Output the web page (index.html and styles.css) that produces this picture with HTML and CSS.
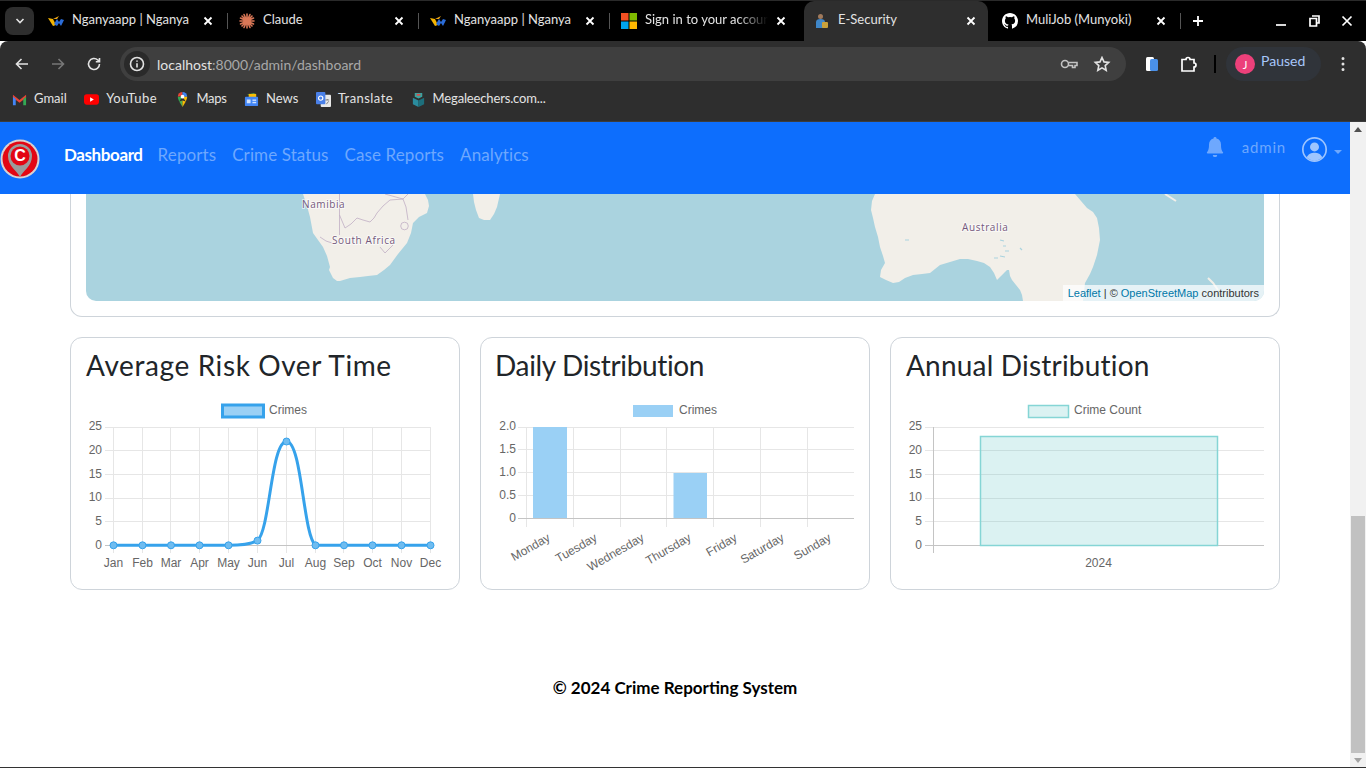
FILE: index.html
```html
<!DOCTYPE html>
<html lang="en">
<head>
    <meta charset="UTF-8">
    <meta name="viewport" content="width=device-width, initial-scale=1.0">
    <title>E-Security</title>
    <link rel="stylesheet" href="styles.css">
</head>

<body>
    <!-- browser frame -->
    <div class="tabstrip">
        <div class="tab-search">
            <svg width="10" height="6" viewBox="0 0 10 6"><path class="ic-line" d="M1.5 1 5 4.5 8.5 1"/></svg>
        </div>
        <div class="tab">
            <svg class="fav" viewBox="0 0 16 16"><path fill="#f5b400" d="M0 5l5 1 3 6-3 1z"/><path fill="#2b6cd8" d="M6 11l3-5 2 3 2-3 3 1-3 6-2-3-2 3z"/><path fill="#e8a317" d="M5 6l6-3-2 3z"/></svg>
            <span class="tab-title">Nganyaapp | Nganya</span>
            <svg class="tab-x" viewBox="0 0 10 10"><path d="M1.5 1.5l7 7M8.5 1.5l-7 7"/></svg>
        </div>
        <div class="tab">
            <svg class="fav" viewBox="0 0 16 16"><path stroke="#d97757" stroke-width="1.6" stroke-linecap="round" d="M8 1v14M1 8h14M3 3l10 10M13 3 3 13M5 1.5l6 13M11 1.5l-6 13M1.5 5l13 6M14.5 5l-13 6"/></svg>
            <span class="tab-title">Claude</span>
            <svg class="tab-x" viewBox="0 0 10 10"><path d="M1.5 1.5l7 7M8.5 1.5l-7 7"/></svg>
        </div>
        <div class="tab">
            <svg class="fav" viewBox="0 0 16 16"><path fill="#f5b400" d="M0 5l5 1 3 6-3 1z"/><path fill="#2b6cd8" d="M6 11l3-5 2 3 2-3 3 1-3 6-2-3-2 3z"/><path fill="#e8a317" d="M5 6l6-3-2 3z"/></svg>
            <span class="tab-title">Nganyaapp | Nganya</span>
            <svg class="tab-x" viewBox="0 0 10 10"><path d="M1.5 1.5l7 7M8.5 1.5l-7 7"/></svg>
        </div>
        <div class="tab tab-nosep">
            <svg class="fav" viewBox="0 0 16 16"><rect width="7.5" height="7.5" fill="#f25022"/><rect x="8.5" width="7.5" height="7.5" fill="#7fba00"/><rect y="8.5" width="7.5" height="7.5" fill="#00a4ef"/><rect x="8.5" y="8.5" width="7.5" height="7.5" fill="#ffb900"/></svg>
            <span class="tab-title tab-fade">Sign in to your account</span>
            <svg class="tab-x" viewBox="0 0 10 10"><path d="M1.5 1.5l7 7M8.5 1.5l-7 7"/></svg>
        </div>
        <div class="tab tab-active tab-nosep">
            <svg class="fav" viewBox="0 0 16 16"><circle cx="6.500" cy="3.500" r="2.500" fill="#a07a5c"/><path fill="#3f87c9" d="M2 15V9q0-3 4.500-3T11 9v6z"/><rect x="8" y="9" width="6" height="6" rx="1" fill="#c9a13b"/></svg>
            <span class="tab-title">E-Security</span>
            <svg class="tab-x" viewBox="0 0 10 10"><path d="M1.5 1.5l7 7M8.5 1.5l-7 7"/></svg>
        </div>
        <div class="tab tab-last">
            <svg class="fav" viewBox="0 0 16 16"><path fill="#fff" d="M8 0C3.580 0 0 3.580 0 8c0 3.540 2.290 6.530 5.470 7.590.4.070.55-.17.55-.38v-1.340c-2.230.48-2.700-1.070-2.700-1.070-.36-.92-.89-1.170-.89-1.170-.73-.5.050-.49.050-.49.800.060 1.230.830 1.230.830.710 1.220 1.870.870 2.330.660.070-.520.280-.870.510-1.070-1.780-.2-3.640-.890-3.640-3.950 0-.870.310-1.590.820-2.150-.080-.2-.360-1.020.080-2.120 0 0 .670-.210 2.200.820a7.600 7.600 0 0 1 4 0c1.530-1.040 2.200-.820 2.200-.820.440 1.100.160 1.920.080 2.120.510.560.820 1.270.820 2.150 0 3.070-1.870 3.750-3.650 3.950.290.250.540.730.540 1.480v2.200c0 .210.150.460.550.380A8.010 8.010 0 0 0 16 8c0-4.420-3.580-8-8-8z"/></svg>
            <span class="tab-title">MuliJob (Munyoki)</span>
            <svg class="tab-x" viewBox="0 0 10 10"><path d="M1.5 1.5l7 7M8.5 1.5l-7 7"/></svg>
        </div>
        <svg class="tab-plus" viewBox="0 0 12 12"><path d="M6 1v10M1 6h10"/></svg>
        <div class="win-controls">
            <svg viewBox="0 0 12 12"><path d="M1 10h10"/></svg>
            <svg viewBox="0 0 12 12"><path d="M4 1h7v7H9M2 3.500h6.500V11H2z"/></svg>
            <svg viewBox="0 0 12 12"><path d="M1.500 1.500l9 9M10.500 1.500l-9 9"/></svg>
        </div>
    </div>

    <div class="toolbar">
        <svg class="tool-ic" viewBox="0 0 16 16"><path class="ic-line" d="M14 8H2.500M7.500 3 2.500 8l5 5"/></svg>
        <svg class="tool-ic tool-off" viewBox="0 0 16 16"><path class="ic-line" d="M2 8h11.500M8.500 3l5 5-5 5"/></svg>
        <svg class="tool-ic" viewBox="0 0 16 16"><path class="ic-line" d="M13.500 8A5.500 5.500 0 1 1 11.800 4L13.500 5.700M13.500 2v3.700H9.800"/></svg>
        <div class="omnibox">
            <div class="site-info">
                <svg width="16" height="16" viewBox="0 0 16 16"><circle class="ic-line" cx="8" cy="8" r="6.500"/><path class="ic-line" d="M8 7.200V11.500M8 4.500v1.200"/></svg>
            </div>
            <span class="url"><span class="url-host">localhost</span>:8000/admin/dashboard</span>
            <svg class="omni-ic" viewBox="0 0 18 12"><circle class="ic-grey" cx="5" cy="6" r="3.500"/><path class="ic-grey" d="M8.500 4.500H17v3h-2v2h-2.500v-2h-4"/></svg>
            <svg class="omni-ic omni-star" viewBox="0 0 16 16"><path class="ic-line" d="M8 1.500l2 4.400 4.700.5-3.500 3.200 1 4.700L8 11.900l-4.200 2.400 1-4.700L1.300 6.400 6 5.900z"/></svg>
        </div>
        <svg class="tool-ic tool-reader" viewBox="0 0 16 16"><rect x="2" y="1" width="8" height="14" rx="1.500" fill="#fff"/><rect x="6" y="3" width="8" height="12" rx="1.500" fill="#4a90e8"/></svg>
        <svg class="tool-ic tool-ext" viewBox="0 0 18 18"><path class="ic-white" d="M2 4.500h4a2 2 0 0 1 4 0h4v3.500a2 2 0 0 1 0 4v4H2z"/></svg>
        <span class="tool-sep"></span>
        <div class="profile">
            <span class="avatar">J</span>
            <span class="paused">Paused</span>
        </div>
        <svg class="tool-ic tool-more" viewBox="0 0 16 16"><path fill="#e3e3e3" d="M6.500 2.500a1.500 1.500 0 1 0 3 0 1.500 1.500 0 0 0-3 0zM6.500 8a1.500 1.500 0 1 0 3 0 1.500 1.500 0 0 0-3 0zM6.500 13.500a1.500 1.500 0 1 0 3 0 1.500 1.500 0 0 0-3 0z"/></svg>
    </div>

    <div class="bookmarks">
        <div class="bm">
            <svg viewBox="0 0 16 16"><path fill="#ea4335" d="M1 3l7 5.500L15 3v3L8 11.500 1 6z"/><path fill="#4285f4" d="M1 5v9h3V7.500z"/><path fill="#34a853" d="M15 5v9h-3V7.500z"/></svg>
            <span>Gmail</span>
        </div>
        <div class="bm bm-wide">
            <svg viewBox="0 0 16 16"><rect y="2.500" width="16" height="11" rx="3" fill="#f00"/><path fill="#fff" d="M6.500 5.500v5l4-2.500z"/></svg>
            <span>YouTube</span>
        </div>
        <div class="bm bm-maps">
            <svg viewBox="0 0 16 16"><path fill="#4caf50" d="M8 16 4.500 10 8 9z"/><path fill="#fbbc04" d="M8 16l3.500-6L8 9z"/><path fill="#ea4335" d="M3 5a5 5 0 0 1 5-5v4z"/><path fill="#4285f4" d="M8 0a5 5 0 0 1 5 5H8z"/><path fill="#34a853" d="M3 5c0 2 1 3.500 1.500 5L8 5z"/><path fill="#fbbc04" d="M13 5c0 2-1 3.500-1.500 5L8 5z"/><circle cx="8" cy="5" r="2" fill="#fff"/></svg>
            <span>Maps</span>
        </div>
        <div class="bm">
            <svg viewBox="0 0 16 16"><path fill="#34a853" d="M3 3l8-2 1 3z"/><path fill="#fbbc04" d="M5 2h8v4H5z"/><rect x="1" y="5" width="14" height="10" rx="1" fill="#4285f4"/><rect x="3" y="8" width="4" height="4" fill="#cfe2ff"/><rect x="9" y="8" width="4" height="1.500" fill="#cfe2ff"/><rect x="9" y="10.500" width="4" height="1.500" fill="#cfe2ff"/></svg>
            <span>News</span>
        </div>
        <div class="bm bm-wide">
            <svg viewBox="0 0 16 16"><rect x="5" y="3" width="11" height="13" rx="1" fill="#e8e8e8"/><rect width="10" height="13" rx="1" fill="#4a80e8"/><circle cx="5" cy="6.500" r="2.300" fill="none" stroke="#fff" stroke-width="1.200"/><path stroke="#777" d="M10 8.500h4M12 7.500v1M11 13l2.500-3"/></svg>
            <span>Translate</span>
        </div>
        <div class="bm bm-narrow">
            <svg viewBox="0 0 16 16"><path fill="#2a8c9e" d="M2 6l6 3v7l-6-3z"/><path fill="#1d6f7c" d="M14 6 8 9v7l6-3z"/><path fill="#3aa3a0" d="M4 1h8v4l-4 2-4-2z"/><rect x="6" y="2" width="4" height="2" fill="#d3504c"/></svg>
            <span>Megaleechers.com...</span>
        </div>
    </div>

    <div class="viewport">
        <div class="page">
            <nav class="navbar">
                <svg class="logo" viewBox="0 0 40 40">
                    <circle cx="20" cy="20" r="19.500" fill="#d9d2d2"/>
                    <circle cx="20" cy="20" r="17.500" fill="#e30613"/>
                    <path fill="#9b9b9b" d="M20 38c-3-6-12-11-12-21a12 12 0 0 1 24 0c0 10-9 15-12 21z"/>
                    <circle cx="20" cy="17" r="9.500" fill="#e30613"/>
                    <text class="logo-c" x="20" y="22">C</text>
                </svg>
                <a class="nav-link nav-active">Dashboard</a>
                <a class="nav-link">Reports</a>
                <a class="nav-link">Crime Status</a>
                <a class="nav-link">Case Reports</a>
                <a class="nav-link">Analytics</a>
                <div class="nav-right">
                    <svg class="bell" viewBox="0 0 20 20"><path d="M10 0a1.500 1.500 0 0 0-1.500 1.600C5.500 2.300 4 4.700 4 7.500c0 5-1 6.500-2 7.700-.4.500 0 1.300.7 1.300h14.600c.7 0 1.100-.8.700-1.300-1-1.200-2-2.700-2-7.700 0-2.800-1.500-5.200-4.500-5.900A1.500 1.500 0 0 0 10 0zM7.800 18a2.200 2.200 0 0 0 4.400 0z"/></svg>
                    <span class="nav-user">admin</span>
                    <svg class="user-ic" viewBox="0 0 24 24"><circle class="user-ring" cx="12" cy="12" r="11.200"/><circle class="user-fill" cx="12" cy="9.500" r="4.300"/><path class="user-fill" d="M4.500 19.500c1.500-3.500 4.500-4.500 7.500-4.500s6 1 7.500 4.500A11 11 0 0 1 12 23a11 11 0 0 1-7.500-3.500z"/></svg>
                    <span class="user-caret"></span>
                </div>
            </nav>

            <main class="content">
                <section class="map-card">
                    <div class="map">
                        <svg class="map-svg" viewBox="86 194 1178 107">
                            <path class="land" d="M303 194L307 206 310 217 313 233 318 240 323 247 327 256 330 267 329 270 333 278 337 281 340 281 350 278 360 277 368 276 377 275 384 270 390 265 398 254 407 243 411 233 413 223 419 217 427 213 429 206 428 200 425 194Z"/>
                            <path class="land" d="M473 194L474 202 476 210 479 218 484 220 490 220 494 214 497 207 500 194Z"/>
                            <path class="land" d="M875 194L872 201 871 210 873 218 875 227 878 237 880 247 883 256 885 263 881 270 880 277 886 280 893 283 899 282 905 278 913 275 922 274 930 273 935 269 940 265 950 262 960 259 968 259 977 261 984 263 990 267 994 273 997 280 1001 276 1007 270 1009 270 1010 276 1012 280 1016 285 1020 290 1022 295 1023 301H1083L1085 283 1090 274 1093 267 1097 255 1100 240 1099 228 1097 218 1093 212 1087 208 1081 201 1075 194Z"/>
                            <path class="island" d="M1165 194l11 7M1208 278l5 5 5 7"/>
                            <path class="border" d="M339.500 194V235M339.500 215L345 228 351 224 357 218 363 220 370 222 374 218 377 213 383 206 390 200 403 199 385 194M403 199L408 194M403 199L406 207 408 220M320 237L323 239 326 241 332 243M380 247L385 253 393 245"/>
                            <circle class="border" cx="404.500" cy="226" r="3.800"/>
                            <path class="lake" d="M1000 240l4 1M1003 246l3 0M1005 251l4 0M1000 256l5 1M994 258l4 0M905 240l4 0M1020 248l2 2M1000 280l6-8"/>
                            <text class="map-label" x="302" y="208">Namibia</text>
                            <text class="map-label" x="332" y="244">South Africa</text>
                            <text class="map-label" x="962" y="231">Australia</text>
                        </svg>
                        <div class="attribution"><a>Leaflet</a> | © <a>OpenStreetMap</a> contributors</div>
                    </div>
                </section>

                <section class="chart-row">
                    <div class="chart-card">
                        <h3 class="chart-title title-risk">Average Risk Over Time</h3>
                        <svg class="chart" viewBox="86 397 358 178">
                            <rect class="legend-line" x="222.500" y="405" width="41" height="12"/>
                            <text class="chart-text" x="269" y="414">Crimes</text>
                            <path class="grid" d="M105 427.500H431M105 450.500H431M105 474.500H431M105 498.500H431M105 521.500H431M113.500 427V553M142.500 427V553M170.500 427V553M199.500 427V553M228.500 427V553M257.500 427V553M286.500 427V553M315.500 427V553M343.500 427V553M372.500 427V553M401.500 427V553M430.500 427V553"/>
                            <path class="zero" d="M105 545.500H431"/>
                            <g class="tick-y">
                                <text x="102" y="430">25</text>
                                <text x="102" y="454">20</text>
                                <text x="102" y="478">15</text>
                                <text x="102" y="501">10</text>
                                <text x="102" y="525">5</text>
                                <text x="102" y="549">0</text>
                            </g>
                            <g class="tick-x">
                                <text x="113.500" y="567">Jan</text>
                                <text x="142.500" y="567">Feb</text>
                                <text x="171" y="567">Mar</text>
                                <text x="199.500" y="567">Apr</text>
                                <text x="228.500" y="567">May</text>
                                <text x="257.500" y="567">Jun</text>
                                <text x="286.500" y="567">Jul</text>
                                <text x="315.500" y="567">Aug</text>
                                <text x="344" y="567">Sep</text>
                                <text x="372.500" y="567">Oct</text>
                                <text x="401.500" y="567">Nov</text>
                                <text x="430.500" y="567">Dec</text>
                            </g>
                            <path class="risk-line" d="M113.500 545.300H228.500C240 545.300 250 544.500 257.500 540.600C270 530 271 441.500 286.500 441.500C302 441.500 303 535 315.500 545.300H430.500"/>
                            <g class="risk-points">
                                <circle cx="113.500" cy="545.300" r="3.500"/><circle cx="142.500" cy="545.300" r="3.500"/><circle cx="171" cy="545.300" r="3.500"/><circle cx="199.500" cy="545.300" r="3.500"/><circle cx="228.500" cy="545.300" r="3.500"/><circle cx="257.500" cy="540.600" r="3.500"/><circle cx="286.500" cy="441.500" r="3.500"/><circle cx="315.500" cy="545.300" r="3.500"/><circle cx="344" cy="545.300" r="3.500"/><circle cx="372.500" cy="545.300" r="3.500"/><circle cx="401.500" cy="545.300" r="3.500"/><circle cx="430.500" cy="545.300" r="3.500"/>
                            </g>
                        </svg>
                    </div>

                    <div class="chart-card">
                        <h3 class="chart-title title-daily">Daily Distribution</h3>
                        <svg class="chart" viewBox="496 397 358 178">
                            <rect class="bar-blue" x="633" y="405" width="40" height="12"/>
                            <text class="chart-text" x="679" y="414">Crimes</text>
                            <path class="grid" d="M518 427.500H854M518 449.500H854M518 472.500H854M518 495.500H854M526.500 427V527M573.500 427V527M620.500 427V527M666.500 427V527M713.500 427V527M760.500 427V527M807.500 427V527"/>
                            <path class="zero" d="M518 518.500H854"/>
                            <g class="tick-y">
                                <text x="516" y="430">2.0</text>
                                <text x="516" y="453">1.5</text>
                                <text x="516" y="476">1.0</text>
                                <text x="516" y="499">0.5</text>
                                <text x="516" y="522">0</text>
                            </g>
                            <rect class="bar-blue" x="533" y="427" width="34" height="91"/>
                            <rect class="bar-blue" x="673.500" y="473" width="33.500" height="45"/>
                            <g class="tick-rot">
                                <text transform="translate(551 540) rotate(-30)">Monday</text>
                                <text transform="translate(598 540) rotate(-30)">Tuesday</text>
                                <text transform="translate(645 540) rotate(-30)">Wednesday</text>
                                <text transform="translate(692 540) rotate(-30)">Thursday</text>
                                <text transform="translate(738 540) rotate(-30)">Friday</text>
                                <text transform="translate(785 540) rotate(-30)">Saturday</text>
                                <text transform="translate(832 540) rotate(-30)">Sunday</text>
                            </g>
                        </svg>
                    </div>

                    <div class="chart-card">
                        <h3 class="chart-title title-annual">Annual Distribution</h3>
                        <svg class="chart" viewBox="906 397 358 178">
                            <rect class="bar-teal" x="1028.500" y="405.500" width="40" height="12"/>
                            <text class="chart-text" x="1074" y="414">Crime Count</text>
                            <path class="grid" d="M925 427.500H1264M925 450.500H1264M925 474.500H1264M925 498.500H1264M925 521.500H1264"/>
                            <path class="zero" d="M925 545.500H1264M933.500 427V553"/>
                            <g class="tick-y">
                                <text x="922" y="430">25</text>
                                <text x="922" y="454">20</text>
                                <text x="922" y="478">15</text>
                                <text x="922" y="501">10</text>
                                <text x="922" y="525">5</text>
                                <text x="922" y="549">0</text>
                            </g>
                            <rect class="bar-teal" x="980.500" y="436.500" width="237" height="109"/>
                            <g class="tick-x">
                                <text x="1098.500" y="567">2024</text>
                            </g>
                        </svg>
                    </div>
                </section>

                <footer class="site-footer">© 2024 Crime Reporting System</footer>
            </main>
        </div>

        <div class="scrollbar">
            <span class="arrow-up"></span>
            <span class="thumb"></span>
            <span class="arrow-down"></span>
        </div>
    </div>
</body>
</html>
```

FILE: styles.css
```css
* {
    box-sizing: border-box;
}

html, body {
    margin: 0;
    height: 100%;
    overflow: hidden;
}

body {
    display: flex;
    flex-direction: column;
    width: 1366px;
    height: 768px;
    font-family: "Lato", "Open Sans", sans-serif;
    background-color: #fff;
    border-bottom: 1px solid #333;
}

svg {
    display: block;
    flex: none;
}

/* browser frame */
.tabstrip {
    display: flex;
    align-items: center;
    height: 41px;
    padding-left: 5px;
    background-color: #000;
    border-top: 1px solid #2a2a2a;
}

.tab-search {
    display: flex;
    align-items: center;
    justify-content: center;
    width: 29px;
    height: 28px;
    margin-right: 3px;
    background-color: #2e2e2e;
    border-radius: 8px;
}

.ic-line {
    fill: none;
    stroke: #e3e3e3;
    stroke-width: 1.6;
}

.ic-white {
    fill: none;
    stroke: #fff;
    stroke-width: 1.7;
}

.ic-grey {
    fill: none;
    stroke: #c4c4c4;
    stroke-width: 1.6;
}

.tab {
    display: flex;
    align-items: center;
    width: 191px;
    height: 40px;
    padding-left: 11px;
    color: #e3e3e3;
    font-size: 13px;
}

/* short divider between tabs */
.tab::after {
    content: "";
    width: 1px;
    height: 16px;
    margin-left: 14px;
    background-color: #555;
}

.tab-nosep::after {
    background-color: transparent;
}

.tab-active {
    width: 184px;
    margin-left: 3px;
    padding-left: 10px;
    background-color: #2e2e2e;
    border-radius: 10px 10px 0 0;
}

.tab-active::after {
    margin-left: 11px;
}

.tab-last {
    width: 193px;
    padding-left: 14px;
}

.fav {
    width: 16px;
    height: 16px;
    margin-right: 8px;
}

.tab-title {
    flex: 1;
    overflow: hidden;
    white-space: nowrap;
    margin-top: -5px;
}

.tab-fade {
    -webkit-mask-image: linear-gradient(to right, #000 75%, transparent);
    mask-image: linear-gradient(to right, #000 75%, transparent);
}

.tab-x {
    width: 10px;
    height: 10px;
    margin-left: 8px;
    fill: none;
    stroke: #fff;
    stroke-width: 1.8;
}

.tab-plus {
    width: 12px;
    height: 12px;
    margin-left: 11px;
    fill: none;
    stroke: #fff;
    stroke-width: 1.8;
}

.win-controls {
    display: flex;
    gap: 21px;
    margin-left: auto;
    padding-right: 13px;
}

.win-controls svg {
    width: 12px;
    height: 12px;
    fill: none;
    stroke: #fff;
    stroke-width: 1.7;
}

.toolbar {
    display: flex;
    align-items: center;
    height: 42px;
    padding: 4px 0 0 14px;
    background-color: #2e2e2e;
    border-radius: 8px 8px 0 0;
}

.tool-ic {
    width: 16px;
    height: 16px;
    margin-right: 20px;
}

.tool-off .ic-line {
    stroke: #777;
}

.omnibox {
    display: flex;
    align-items: center;
    width: 1006px;
    height: 34px;
    margin-left: -2px;
    padding: 0 15px 0 4px;
    background-color: #3f3f3f;
    border-radius: 17px;
}

.site-info {
    display: flex;
    align-items: center;
    justify-content: center;
    width: 26px;
    height: 26px;
    margin-right: 7px;
    background-color: #2a2a2a;
    border-radius: 50%;
}

.url {
    flex: 1;
    color: #a8a8a8;
    font-size: 14px;
}

.url-host {
    color: #e3e3e3;
}

.omni-ic {
    width: 18px;
    height: 16px;
}

.omni-star {
    margin-left: 15px;
}

.tool-reader {
    margin-left: 18px;
}

.tool-ext {
    width: 18px;
    height: 18px;
    margin-right: 16px;
}

.tool-sep {
    width: 2px;
    height: 18px;
    margin-right: 10px;
    background-color: #000;
}

.profile {
    display: flex;
    align-items: center;
    width: 95px;
    height: 34px;
    padding-left: 9px;
    background-color: #30343a;
    border-radius: 17px;
}

.avatar {
    display: flex;
    align-items: center;
    justify-content: center;
    width: 20px;
    height: 20px;
    margin-right: 6px;
    color: #fff;
    font-size: 11px;
    background-color: #ec407a;
    border-radius: 50%;
}

.paused {
    margin-top: -7px;
    color: #a8c7fa;
    font-size: 14px;
}

.tool-more {
    margin-left: 14px;
    margin-right: 0;
}

.bookmarks {
    display: flex;
    align-items: center;
    gap: 17.5px;
    height: 39px;
    padding: 0 0 6px 12px;
    background-color: #2e2e2e;
    border-bottom: 1px solid #3c3c3c;
}

.bm {
    display: flex;
    align-items: center;
    gap: 7px;
    color: #e3e3e3;
    font-size: 13px;
}

.bm svg {
    width: 15px;
    height: 15px;
}

.bm span {
    margin-top: -2px;
}

.bm-wide span {
    letter-spacing: .45px;
}

.bm-maps span {
    letter-spacing: -.3px;
}

.bm-narrow span {
    letter-spacing: -.15px;
}

.viewport {
    display: flex;
    flex: 1;
    min-height: 0;
}

.page {
    flex: 1;
    min-width: 0;
}

/* navbar */
.navbar {
    display: flex;
    align-items: center;
    gap: 16px;
    height: 72px;
    background-color: #0d6efd;
}

.logo {
    width: 40px;
    height: 40px;
    margin-right: 8px;
    margin-top: 2px;
}

.logo-c {
    fill: #fff;
    font-family: "Liberation Sans", sans-serif;
    font-size: 16px;
    font-weight: 700;
    text-anchor: middle;
}

.nav-link {
    margin-bottom: 7px;
    color: #6ea8fe;
    font-size: 17px;
    letter-spacing: .1px;
}

.nav-active {
    margin-right: -1px;
    color: #fff;
    font-weight: 700;
    letter-spacing: -.4px;
}

.nav-right {
    display: flex;
    align-items: center;
    margin-left: auto;
    margin-bottom: 18px;
    padding-right: 8px;
}

.bell {
    width: 20px;
    height: 20px;
    margin-right: 17px;
    fill: #6ea8fe;
    margin-top: -4px;
}

.nav-user {
    margin-right: 16px;
    margin-top: -4px;
    color: #6ea8fe;
    font-size: 15px;
    letter-spacing: .8px;
}

.user-ic {
    width: 25px;
    height: 25px;
    margin-right: 7px;
}

.user-ring {
    fill: none;
    stroke: #9ec5fe;
    stroke-width: 1.6;
}

.user-fill {
    fill: #9ec5fe;
}

.user-caret {
    margin-top: 5px;
    border-top: 4px solid #6ea8fe;
    border-left: 4px solid transparent;
    border-right: 4px solid transparent;
}

/* page body */
.content {
    padding: 0 70px;
}

.map-card {
    padding: 0 15px 15px;
    border: 1px solid #ced4da;
    border-top: 0;
    border-radius: 0 0 12px 12px;
}

.map {
    position: relative;
    height: 107px;
    overflow: hidden;
    background-color: #aad3df;
    border-radius: 0 0 10px 10px;
}

.map-svg {
    width: 1178px;
    height: 107px;
}

.land {
    fill: #f2efe9;
}

.island {
    fill: none;
    stroke: #f2efe9;
    stroke-width: 2;
}

.border {
    fill: none;
    stroke: #c0aec4;
    stroke-width: .8;
}

.lake {
    fill: none;
    stroke: #aad3df;
    stroke-width: 1.2;
}

.map-label {
    fill: #75587c;
    font-family: "Open Sans", sans-serif;
    font-size: 10px;
    letter-spacing: .6px;
    stroke: #fff;
    stroke-width: 2px;
    stroke-opacity: .6;
    paint-order: stroke;
}

.attribution {
    position: absolute;
    right: 0;
    bottom: 0;
    height: 16px;
    padding: 0 5px;
    color: #333;
    font-family: "Liberation Sans", sans-serif;
    font-size: 11px;
    line-height: 17px;
    background-color: rgba(255, 255, 255, .7);
}

.attribution a {
    color: #0078a8;
}

.chart-row {
    display: grid;
    grid-template-columns: repeat(3, 390px);
    gap: 20px;
    margin-top: 20px;
}

.chart-card {
    height: 253px;
    padding: 0 15px;
    border: 1px solid #ced4da;
    border-radius: 12px;
}

.chart-title {
    height: 59px;
    margin: 0;
    padding-top: 8px;
    color: #212529;
    font-size: 28px;
    font-weight: 400;
    line-height: 38px;
    white-space: nowrap;
}

.title-risk {
    letter-spacing: .6px;
}

.title-daily {
    margin-left: -1px;
    letter-spacing: -.35px;
}

.title-annual {
    letter-spacing: .2px;
}

.chart {
    width: 358px;
    height: 178px;
}

.chart-text,
.tick-y text,
.tick-x text,
.tick-rot text {
    fill: #666;
    font-family: "Liberation Sans", sans-serif;
    font-size: 12px;
}

.tick-y text {
    text-anchor: end;
}

.tick-x text {
    text-anchor: middle;
}

.tick-rot text {
    text-anchor: end;
}

.grid {
    fill: none;
    stroke: #e6e6e6;
}

.zero {
    fill: none;
    stroke: #c4c4c4;
}

.legend-line {
    fill: #9ad0f5;
    stroke: #36a2eb;
    stroke-width: 3;
}

.risk-line {
    fill: none;
    stroke: #36a2eb;
    stroke-width: 3;
}

.risk-points circle {
    fill: #6fbcf0;
    stroke: #36a2eb;
    stroke-width: 1;
}

.bar-blue {
    fill: #9ad0f5;
}

.bar-teal {
    fill: rgba(75, 192, 192, .2);
    stroke: #85d5d5;
    stroke-width: 1.5;
}

.site-footer {
    margin-top: 87px;
    color: #000;
    font-size: 17px;
    font-weight: 700;
    text-align: center;
}

/* scrollbar */
.scrollbar {
    display: flex;
    flex-direction: column;
    align-items: center;
    width: 16px;
    background-color: #f1f1f1;
}

.arrow-up {
    margin-top: 5px;
    border-bottom: 5px solid #505050;
    border-left: 4px solid transparent;
    border-right: 4px solid transparent;
}

.thumb {
    width: 14px;
    height: 237px;
    margin-top: 384px;
    background-color: #c1c1c1;
}

.arrow-down {
    margin-top: 5px;
    border-top: 5px solid #a3a3a3;
    border-left: 4px solid transparent;
    border-right: 4px solid transparent;
}
```
